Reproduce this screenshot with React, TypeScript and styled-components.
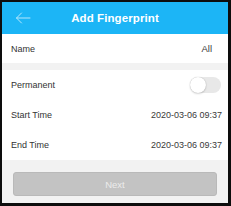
import styled, { createGlobalStyle } from 'styled-components';

const GlobalStyle = createGlobalStyle`
  html, body {
    margin: 0;
    padding: 0;
    background: #ffffff;
  }
  body {
    font-family: "Liberation Sans", Arial, sans-serif;
  }
`;

const Frame = styled.div`
  width: 231px;
  height: 206px;
  box-sizing: border-box;
  border: 2px solid #0d0d0d;
  border-right-width: 3px;
  border-bottom-width: 3px;
  background: #f2f2f2;
  display: flex;
  flex-direction: column;
  overflow: hidden;
`;

const Header = styled.div`
  height: 32px;
  flex: none;
  background: #1cb5f6;
  display: grid;
  grid-template-columns: 40px 1fr 40px;
  align-items: center;
`;

const BackButton = styled.div`
  display: flex;
  align-items: center;
  padding-left: 13px;
  height: 100%;
`;

const Title = styled.div`
  text-align: center;
  color: #ffffff;
  font-size: 11.5px;
  font-weight: 700;
  letter-spacing: 0.1px;
`;

const Section = styled.div<{ $gap?: number }>`
  background: #ffffff;
  margin-top: ${(p) => p.$gap ?? 0}px;
  display: flex;
  flex-direction: column;
`;

const Row = styled.div<{ $height: number }>`
  height: ${(p) => p.$height}px;
  display: flex;
  align-items: center;
  justify-content: space-between;
  padding: 0 6px 0 9px;
`;

const Label = styled.span`
  font-size: 9px;
  color: #333333;
`;

const Value = styled.span<{ $size?: number; $pad?: number }>`
  font-size: ${(p) => p.$size ?? 9}px;
  color: #3a3a3a;
  padding-right: ${(p) => p.$pad ?? 0}px;
`;

const Toggle = styled.div`
  width: 31px;
  height: 16px;
  margin-right: 1px;
  border-radius: 8px;
  background: #e8e8e8;
  position: relative;
`;

const Knob = styled.div`
  position: absolute;
  left: 0;
  top: 0;
  width: 16px;
  height: 16px;
  border-radius: 50%;
  background: #ffffff;
  box-shadow: 0 0 1px rgba(0, 0, 0, 0.25), 0 1px 2px rgba(0, 0, 0, 0.15);
`;

const Footer = styled.div`
  flex: 1;
  padding: 12px 11px 0 11px;
`;

const NextButton = styled.button`
  width: 100%;
  height: 24px;
  border: 1px solid #b9b9b9;
  border-radius: 3px;
  background: #c3c3c3;
  color: #ececec;
  font-family: "Liberation Sans", Arial, sans-serif;
  font-size: 9.5px;
  cursor: default;
`;

function App() {
  return (
    <>
      <GlobalStyle />
      <Frame>
        <Header>
          <BackButton>
            <svg width="16" height="12" viewBox="0 0 16 12">
              <path
                d="M15 6H1.5M6.5 1L1.5 6l5 5"
                fill="none"
                stroke="#b4e6fc"
                strokeWidth="1"
                strokeLinecap="round"
                strokeLinejoin="round"
              />
            </svg>
          </BackButton>
          <Title>Add Fingerprint</Title>
          <div />
        </Header>

        <Section>
          <Row $height={29}>
            <Label>Name</Label>
            <Value $size={9.5} $pad={10}>All</Value>
          </Row>
        </Section>

        <Section $gap={7}>
          <Row $height={30}>
            <Label>Permanent</Label>
            <Toggle>
              <Knob />
            </Toggle>
          </Row>
          <Row $height={30}>
            <Label>Start Time</Label>
            <Value>2020-03-06 09:37</Value>
          </Row>
          <Row $height={30}>
            <Label>End Time</Label>
            <Value>2020-03-06 09:37</Value>
          </Row>
        </Section>

        <Footer>
          <NextButton>Next</NextButton>
        </Footer>
      </Frame>
    </>
  );
}

export default App;
